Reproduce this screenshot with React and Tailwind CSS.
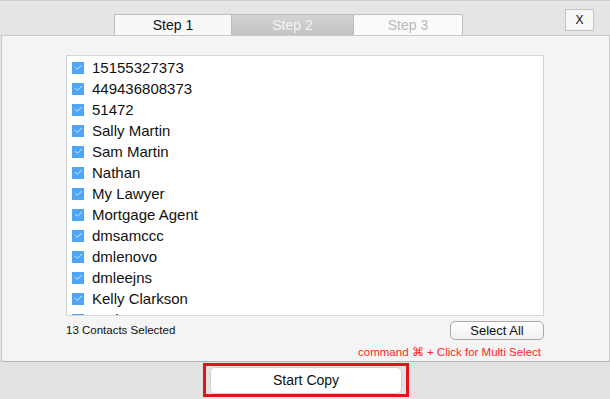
import { Check } from 'lucide-react';

const contacts = [
  '15155327373',
  '449436808373',
  '51472',
  'Sally Martin',
  'Sam Martin',
  'Nathan',
  'My Lawyer',
  'Mortgage Agent',
  'dmsamccc',
  'dmlenovo',
  'dmleejns',
  'Kelly Clarkson',
  'Andy',
];

const App = () => {
  return (
    <div
      className="w-[610px] h-[399px] flex flex-col bg-[#e3e3e3] overflow-hidden text-[#111]"
      style={{ fontFamily: '"Liberation Sans", Arial, sans-serif' }}
    >
      {/* header with step tabs */}
      <div className="h-[35px] flex items-start border-t border-[#cfcfcf] bg-[#e5e5e5]">
        <div className="flex self-end h-[21px] ml-[114px]">
          <div className="w-[118px] flex items-center justify-center border border-b-0 border-[#bdbdbd] bg-[#f8f8f8] text-[14px]">
            Step 1
          </div>
          <div className="w-[121px] flex items-center justify-center border-t border-[#bdbdbd] bg-gradient-to-b from-[#d3d3d3] to-[#c3c3c3] text-[14px] text-[#f4f4f4]">
            Step 2
          </div>
          <div className="w-[110px] flex items-center justify-center border border-b-0 border-[#bdbdbd] bg-[#fafafa] text-[14px] text-[#b9b9b9]">
            Step 3
          </div>
        </div>
        <button className="ml-auto mr-[16px] mt-[8px] w-[29px] h-[22px] border border-[#c4c4c4] bg-[#f7f7f7] text-[12px] flex items-center justify-center">
          X
        </button>
      </div>

      {/* main panel */}
      <div className="h-[327px] ml-[1px] border border-[#c9c9c9] border-b-[#b5b5b5] bg-[#f4f4f4] flex flex-col pl-[64px] pr-[65px] pt-[19px]">
        <div className="h-[261px] border border-[#d6d6d6] bg-white overflow-hidden pt-[1px] pl-[5px]">
          {contacts.map((name) => (
            <div key={name} className="h-[21px] flex items-center gap-[8px]">
              <span className="w-[12px] h-[12px] bg-[#4ea5f5] flex items-center justify-center">
                <Check className="w-[9px] h-[9px] text-white" strokeWidth={2} />
              </span>
              <span className="text-[15px] leading-none">{name}</span>
            </div>
          ))}
        </div>

        <div className="flex items-center justify-between mt-[5px] h-[19px]">
          <span className="text-[11.5px]">13 Contacts Selected</span>
          <button className="w-[94px] h-[19px] rounded-[5px] border border-[#a9a9a9] bg-gradient-to-b from-white to-[#f0f0f0] text-[13px] leading-none">
            Select All
          </button>
        </div>
        <div className="text-right pr-[3px] mt-[7px] text-[11.5px] leading-none text-[#ff2626]">
          command ⌘ + Click for Multi Select
        </div>
      </div>

      {/* footer */}
      <div className="flex-1 flex justify-center pt-[1px] pl-[2px]">
        <div className="w-[206px] h-[34px] border-[3px] border-[#e3131b] flex items-start justify-center pt-[1px]">
          <button className="w-[192px] h-[27px] rounded-[5px] border border-[#cfcfcf] bg-white text-[14px]">
            Start Copy
          </button>
        </div>
      </div>
    </div>
  );
};

export default App;
